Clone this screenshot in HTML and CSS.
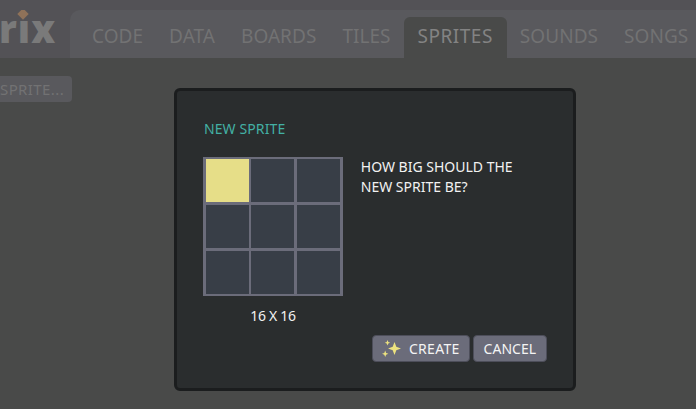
FILE: index.html
```html
<!DOCTYPE html>
<html lang="en">
<head>
  <meta charset="UTF-8" />
  <title>Sprites</title>
  <link rel="stylesheet" href="styles.css">
</head>
<body>
  <header>
    <div class="logo">
      <span class="logo-mark"></span>
      <span class="logo-text">rıx</span>
    </div>
    <nav>
      <a href="#">CODE</a>
      <a href="#">DATA</a>
      <a href="#">BOARDS</a>
      <a href="#">TILES</a>
      <a href="#" class="active">SPRITES</a>
      <a href="#">SOUNDS</a>
      <a href="#">SONGS</a>
    </nav>
  </header>

  <main>
    <button class="add-btn">SPRITE...</button>
  </main>

  <div class="overlay">
    <div class="modal">
      <h2>NEW SPRITE</h2>
      <div class="modal-body">
        <div class="picker">
          <div class="grid">
            <div class="cell selected"></div>
            <div class="cell"></div>
            <div class="cell"></div>
            <div class="cell"></div>
            <div class="cell"></div>
            <div class="cell"></div>
            <div class="cell"></div>
            <div class="cell"></div>
            <div class="cell"></div>
          </div>
          <p class="size">16 X 16</p>
        </div>
        <p class="question">HOW BIG SHOULD THE NEW SPRITE BE?</p>
      </div>
      <div class="actions">
        <button class="btn btn-create">
          <svg class="sparkle" viewBox="0 0 19 17" width="19" height="17">
            <path d="M12.5 2 L14.3 6.7 L19 8.5 L14.3 10.3 L12.5 15 L10.7 10.3 L6 8.5 L10.7 6.7 Z" />
            <path d="M5.5 0 L6.3 1.9 L8.2 2.7 L6.3 3.5 L5.5 5.4 L4.7 3.5 L2.8 2.7 L4.7 1.9 Z" />
            <path d="M3.2 10.5 L4.1 12.9 L6.4 13.8 L4.1 14.7 L3.2 17 L2.3 14.7 L0 13.8 L2.3 12.9 Z" />
          </svg>
          CREATE
        </button>
        <button class="btn">CANCEL</button>
      </div>
    </div>
  </div>
</body>
</html>
```

FILE: styles.css
```css
* { box-sizing: border-box; }

html, body {
  height: 100%;
}

body {
  margin: 0;
  overflow: hidden;
  font-family: "Noto Sans", "Open Sans", sans-serif;
  background-color: #494a49;
}

header {
  display: flex;
  height: 58px;
  padding-top: 10px;
  background-color: #535256;
}

.logo {
  position: relative;
  flex: 0 0 70px;
  overflow: hidden;
}

.logo-mark {
  position: absolute;
  top: 0;
  left: 19px;
  width: 8px;
  height: 8px;
  background-color: #8f7259;
  transform: rotate(45deg);
}

.logo-text {
  display: block;
  margin-left: -1px;
  font-size: 38px;
  font-weight: 900;
  letter-spacing: 1px;
  line-height: 36px;
  color: #7a7a7a;
}

nav {
  flex: 1;
  display: flex;
  align-items: flex-end;
  padding-left: 9px;
  background-color: #59595d;
  border-top-left-radius: 10px;
  white-space: nowrap;
}

nav a {
  display: block;
  height: 41px;
  padding: 0 13px;
  font-size: 19px;
  letter-spacing: 0.05px;
  line-height: 38px;
  color: #727273;
  text-decoration: none;
}

nav a.active {
  padding: 0 14px;
  background-color: #494a49;
  border-radius: 6px 6px 0 0;
  letter-spacing: 0.5px;
  color: #838383;
}

main {
  padding-top: 18px;
}

.add-btn {
  display: block;
  width: 72px;
  height: 26px;
  padding: 0 9px 0 0;
  border: none;
  border-radius: 0 4px 4px 0;
  background-color: #59595d;
  font-family: inherit;
  font-size: 15px;
  letter-spacing: 0.4px;
  color: #727273;
  text-align: right;
  white-space: nowrap;
}

.overlay {
  position: absolute;
  top: 0;
  left: 0;
  right: 0;
  bottom: 0;
  padding: 88px 0 0 174px;
}

.modal {
  width: 402px;
  height: 303px;
  padding: 28px 26px 27px;
  background-color: #2a2d2e;
  border: 3px solid #1b1d1e;
  border-radius: 6px;
}

h2 {
  margin: 0 0 0 1px;
  font-size: 14px;
  font-weight: 400;
  letter-spacing: 0.1px;
  line-height: 20px;
  color: #43b0a4;
}

.modal-body {
  display: flex;
  gap: 18px;
  margin-top: 18px;
}

.grid {
  display: grid;
  grid-template-columns: repeat(3, 43px);
  grid-auto-rows: 43px;
  gap: 3px 2.4px;
  padding: 2px 3px;
  background-color: #6b6c7a;
}

.cell {
  background-color: #383e47;
}

.cell.selected {
  background-color: #e6de88;
}

.size {
  margin: 10px 0 0;
  font-size: 14px;
  letter-spacing: -0.3px;
  line-height: 20px;
  color: #f2f2f2;
  text-align: center;
}

.question {
  width: 172px;
  margin: 0;
  font-size: 14px;
  line-height: 20px;
  color: #f2f2f2;
}

.actions {
  display: flex;
  justify-content: flex-end;
  gap: 3px;
  margin-top: 9px;
}

.btn {
  display: flex;
  align-items: center;
  height: 27px;
  padding: 0 10px;
  background-color: #6b6c7a;
  border: 1px solid #4d4e5a;
  border-radius: 4px;
  font-family: inherit;
  font-size: 14px;
  color: #f4f4f4;
}

.btn-create {
  gap: 8px;
  padding: 0 9px;
  letter-spacing: 0.3px;
}

.sparkle {
  fill: #ece27f;
}
```
